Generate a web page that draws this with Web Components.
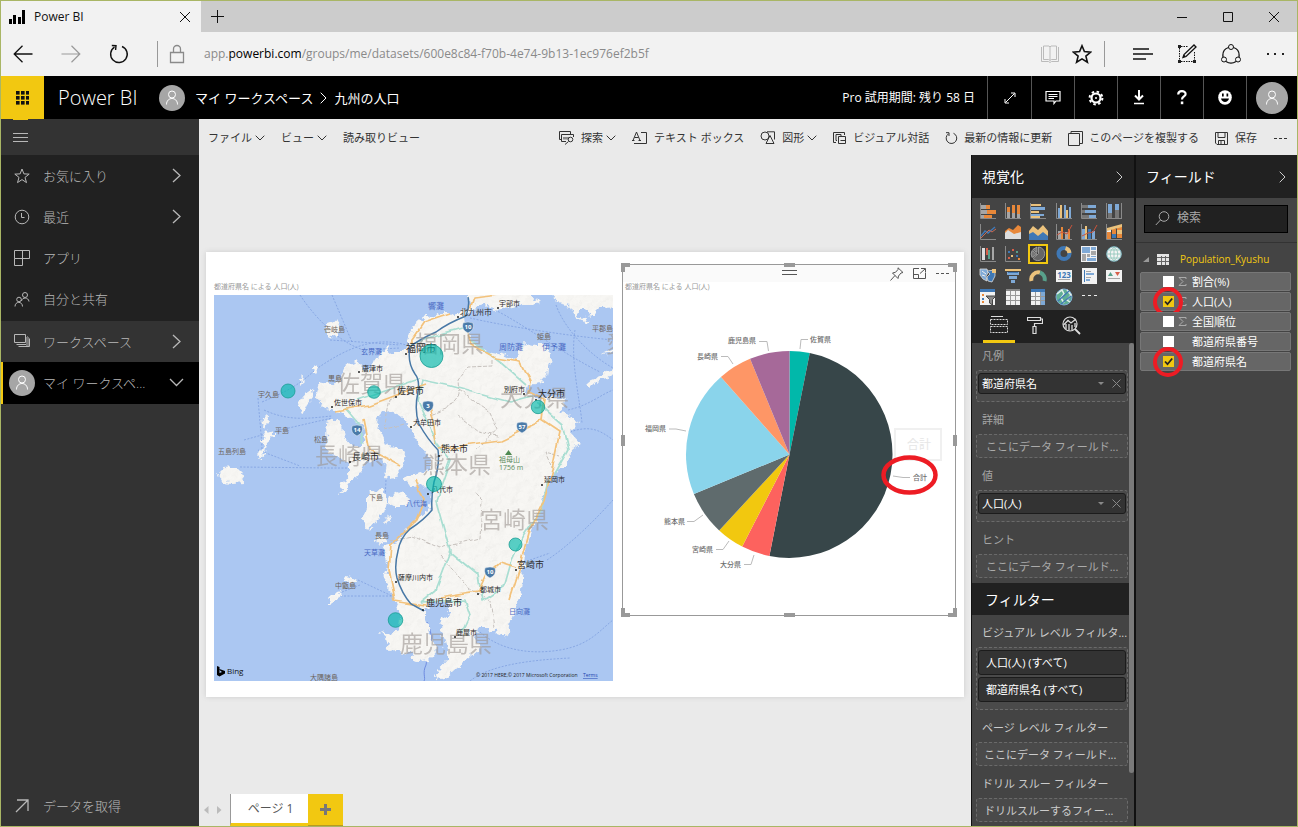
<!DOCTYPE html>
<html lang="ja">
<head>
<meta charset="utf-8">
<title>Power BI</title>
<style>
  html, body { margin: 0; height: 100%; }
  body { font-family: "Open Sans", "Noto Sans CJK JP", sans-serif; font-size: 11px; line-height: 16px; background: #eaeaea; }
</style>
</head>
<body>
<pbi-app></pbi-app>
<script>
const BASE = `
  *, *::before, *::after { box-sizing: border-box; }
  button, input { font: inherit; color: inherit; background: none; border: 0; padding: 0; margin: 0; }
  button { display: inline-flex; align-items: center; justify-content: center; white-space: nowrap; }
  a { color: inherit; text-decoration: none; }
  h1, h2, h3, p { margin: 0; font: inherit; }
`;
function define(name, html, setup) {
  const tpl = document.createElement('template');
  customElements.define(name, class extends HTMLElement {
    connectedCallback() {
      if (this.shadowRoot) return;
      tpl.innerHTML = typeof html === 'function' ? html(this) : html;
      this.attachShadow({ mode: 'open' }).appendChild(tpl.content.cloneNode(true));
      const base = document.createElement('style');
      base.textContent = BASE;
      this.shadowRoot.prepend(base);
      if (setup) setup(this);
    }
  });
}

/* ---------- icons: [width, height, markup] ---------- */
const r = (x, y, w, h, c) => `<rect x="${x}" y="${y}" width="${w}" height="${h}" fill="${c}" stroke="none"/>`;
const p = (d, extra = '') => `<path d="${d}" ${extra}/>`;
const O = '#e8883a', G = '#a6a6a6', B = '#7fa9d6', D = '#3f78b5', Y = '#ebc27c', W = '#f2f2f2';
const axis = p('M1.5 0V15.500H17', 'stroke="#8a8a8a"');
const person = '<circle cx="8" cy="5.500" r="3.500"/><path d="M2.500 15.500C2.500 7.500 13.500 7.500 13.500 15.500"/>';
const ICONS = {
  bars: [16, 14, r(0,9,3,5,'#000') + r(4,5,3,9,'#000') + r(9,7,3,7,'#000') + r(13,0,3,14,'#000')],
  close: [12, 12, p('M1 1L11 11M11 1L1 11')],
  closeS: [9, 9, p('M.5 .5L8.500 8.500M8.500 .5L.5 8.500')],
  plus: [13, 13, p('M6.500 0V13M0 6.500H13')],
  min: [10, 10, p('M0 5.500H10')],
  max: [10, 10, p('M.5 .5H9.500V9.500H.5Z')],
  back: [20, 18, p('M19.500 9H1M9.500 .8L1.200 9L9.500 17.200', 'stroke-width="1.300"')],
  fwd: [20, 18, p('M.5 9H19M10.500 .8L18.800 9L10.500 17.200', 'stroke-width="1.200"')],
  reload: [20, 20, p('M13 2.500A8.300 8.300 0 1 1 5.500 3.200M2.800 1.500L7 1.700L6.600 6', 'stroke-width="1.400"')],
  lock: [16, 20, p('M1.500 8.500H14.500V18.500H1.500ZM4.500 8.500V5A3.500 3.500 0 0 1 11.500 5V8.500', 'stroke-width="1.300"')],
  book: [20, 18, p('M1.500 2V16.500H8.500L10 17.500L11.500 16.500H18.500V2M3.500 1V14.500H8.500L10 15.500L11.500 14.500H16.500V1H11L10 2L9 1ZM10 2V15')],
  star: [20, 20, p('M10 1.800L12.400 7.600L18.700 8.100L13.900 12.100L15.400 18.200L10 14.900L4.600 18.200L6.100 12.100L1.300 8.100L7.600 7.600Z', 'stroke-width="1.600"')],
  lines: [20, 12, p('M0 1H16M0 6H20M0 11H13', 'stroke-width="1.300"')],
  note: [20, 20, p('M2.500 4V16M4 17.500H16M17.500 8V16M4 2.500H11', 'stroke-dasharray="1.500 1"') + r(1,1,3,3,'#222') + r(1,16,3,3,'#222') + r(16,16,3,3,'#222') + p('M6 13.500L7 10.500L17 1L19 3L9 12.500ZM6 13.500L8 11.500', 'stroke-width="1.300"')],
  share: [22, 20, '<circle cx="11" cy="3" r="2.500"/><circle cx="4" cy="15.500" r="2.500"/><circle cx="18" cy="15.500" r="2.500"/>' + p('M8.500 3.500C3.500 5 2.500 9 3 13M13.500 3.500C18.500 5 19.500 9 19 13M6 17.500C9 19.500 13 19.500 16 17.500', 'stroke-width="1.300"')],
  dots: [19, 4, r(1,1,2,2,'#222') + r(8,1,2,2,'#222') + r(16,1,2,2,'#222')],
  waffle: [13, 14, [0,5,10].map(x => [0,5,10].map(y => r(x,y,3.6,3.6,'#111')).join('')).join('')],
  person: [16, 17, person],
  expand: [12, 12, p('M1.500 10.500L10.500 1.500M7 1H11V5M1 7V11H5')],
  comment: [16, 15, p('M1 1.500H15V11H11L9 13.500V11H1ZM3.500 4.500H12.500M3.500 6.500H12.500M3.500 8.500H9', 'stroke-width="1.200"')],
  gear: [16, 16, '<circle cx="8" cy="8" r="4.500" stroke-width="2.200"/><circle cx="8" cy="8" r="6.400" stroke-width="2" stroke-dasharray="2.500 2.500"/><circle cx="8" cy="8" r="1" fill="currentColor" stroke="none"/>'],
  down: [12, 15, p('M6 0V9.500M2 5.500L6 9.500L10 5.500', 'stroke-width="2"') + p('M1 13.500H11', 'stroke-width="1.500"')],
  help: [12, 15, p('M2.200 4.500C2.200 .2 9.600 .2 9.600 4C9.600 6.500 6 6.500 6 9.500', 'stroke-width="2.200"') + r(4.800,11.500,2.500,2.700,'#fff')],
  smile: [14, 15, '<ellipse cx="7" cy="7.500" rx="6.800" ry="7.300" fill="currentColor" stroke="none"/>' + r(4,3.500,1.700,3,'#000') + r(8.500,3.500,1.700,3,'#000') + p('M3 8.500C4 13 10 13 11 8.500Z', 'fill="#000" stroke="none"')],
  menu: [16, 9, p('M0 .5H15M0 4.500H15M0 8.500H15')],
  navstar: [16, 16, p('M8 1L9.900 5.900L15.200 6.100L11 9.400L12.500 14.600L8 11.600L3.500 14.600L5 9.400L.8 6.100L6.100 5.900Z')],
  clock: [16, 16, '<circle cx="8" cy="8" r="6.800"/>' + p('M7.500 4V8.500H10.500')],
  apps: [16, 16, p('M.5 .5H15.500V8.500H.5ZM8.500 .5V8.500M.5 8.500V15.500H8.500V8.500')],
  people: [16, 16, '<circle cx="11" cy="4" r="2.500"/><circle cx="5" cy="8.500" r="2.300"/>' + p('M7.500 10C8 6 14.500 6 15 10.500M1 15.500C1 10 8.500 10 8.500 15.500')],
  stack: [16, 15, p('M.5 .5H11.500V8.500H.5ZM2.500 10.500H13.500V2.500M4.500 12.500H15.500V4.500') + r(12,3,3,9,'#777')],
  right: [9, 15, p('M1 1L8 7.500L1 14', 'stroke-width="1.300"')],
  rightS: [7, 12, p('M.7 .7L6 6L.7 11.300')],
  chevDown: [15, 9, p('M1 1L7.500 7.500L14 1', 'stroke-width="1.300"')],
  chevS: [10, 6, p('M.7 .7L5 5L9.300 .7')],
  getdata: [14, 14, p('M1 13L12.500 1.500M2 1H13V12', 'stroke-width="1.300"')],
  explore: [16, 14, p('M3 8.500H.5V.5H11.500V3M7 10.500H2.500V3.500H14.500V6M5 6V8.500M7 6V8.500M9 6V8.500') + '<circle cx="11.500" cy="8.500" r="2.300"/>' + p('M9.500 10.500L6 13.500')],
  textbox: [16, 14, p('M1 9.500L4.500 1L8 9.500M2.500 6.500H6.500M0 9.500H2.500M6.500 9.500H9M9 1.500H14.500V12.500H2')],
  shapes: [16, 14, '<circle cx="5" cy="5" r="4"/>' + p('M7 .8H14.500V8.500M6 12.500L10 4.500L14 12.500Z')],
  visual: [14, 13, p('M3 10.500H.5V.5H11.500V3M4 8.500H3V2.500H8V5M5.500 4.500H12.500V11.500H5.500ZM7.500 8.500H12.500')],
  refresh: [13, 13, p('M8.500 1.300A5.300 5.300 0 1 1 3.500 1.800M1 .7H4V4')],
  copy: [15, 15, p('M.5 2.500H11.500V14.500H.5ZM3 2V.5H14.500V12.500H12')],
  save: [14, 13, p('M.5 .5H12.500V12.500H2L.5 11ZM3 .5V5.500H10V.5M3.500 12.500V8.500H9.500V12.500M6 9V12')],
  moreS: [15, 3, r(1,1,3,1,'currentColor') + r(6,1,3,1,'currentColor') + r(11,1,3,1,'currentColor')],
  grip: [15, 5, p('M0 .5H15M0 4.500H15')],
  pin: [14, 14, p('M8 .8L13 5.500L11 6L8.500 9L8 11.500L2.500 6L5.500 5.300L8 2.500ZM5 8.500L.5 13.500')],
  focus: [13, 11, p('M6 .5H.5V10.500H12.500V5M8 .5H12.500V4.500M12 1L7 5.500M.5 6.500H5.500V10.500')],
  left: [5, 8, p('M4.500 0L0 4L4.500 8Z', 'fill="currentColor" stroke="none"')],
  rightT: [5, 8, p('M0 0L4.500 4L0 8Z', 'fill="currentColor" stroke="none"')],
  plusB: [11, 11, p('M5.500 0V11M0 5.500H11', 'stroke-width="3"')],
  search: [15, 15, '<circle cx="9" cy="5.500" r="4.800"/>' + p('M5.500 9L.8 14')],
  tri: [6, 5, p('M0 5H6V0Z', 'fill="currentColor" stroke="none"')],
  caret: [6, 3, p('M0 0H6L3 3Z', 'fill="currentColor" stroke="none"')],
  table: [12, 11, r(0,0,12,11,'#e6e6e6') + p('M0 3.500H12M0 7.500H12M4.500 2V11M8.500 2V11', 'stroke="#666"')],
  sigma: [9, 9, p('M8 2V.5H1L5 4.500L1 8.500H8V7')],
  fieldsTab: [18, 18, p('M1 .5H13') + p('M.5 3.500H17.500V8.500H.5ZM.5 10.500H17.500V16.500H.5Z', 'stroke-dasharray="2 1"')],
  format: [16, 18, p('M.5 1.500H13.500V4.500H.5ZM13.500 3H15.500V7.500H7.500V10M6 10.500H9V17.500H6Z', 'stroke-width="1.200"')],
  analytics: [19, 19, '<circle cx="8" cy="8" r="7" stroke-width="1.200"/>' + p('M1.500 9L6 4.500L9 7L14 3M4 8V13M7 8V14.500M10 9V14M13 7V11', 'stroke-width="1.300"') + p('M13 13L18 18', 'stroke-width="1.800"')],
  /* chart gallery */
  v0: [18,16, axis + r(2,2,5,4,G)+r(7,2,4,4,O)+r(2,7,6,4,G)+r(8,7,9,4,O)+r(2,12,3,3,G)+r(5,12,8,3,O)],
  v1: [18,16, axis + r(3,8,3,7,G)+r(3,4,3,5,O)+r(8,9,3,6,G)+r(8,2,3,8,O)+r(13,11,3,4,G)+r(13,2,3,9,O)],
  v2: [18,16, axis + r(2,1,10,2,Y)+r(2,4,14,3,B)+r(2,8,8,2,Y)+r(2,11,13,2,B)+r(2,13,9,2,Y)],
  v3: [18,16, axis + r(3,5,2,10,B)+r(5,2,2,13,Y)+r(9,2,2,13,B)+r(11,7,2,8,Y)+r(14,4,2,11,B)],
  v4: [18,16, axis + r(2,2,6,3,'#777')+r(8,2,8,3,B)+r(2,7,3,3,'#777')+r(5,7,11,3,B)+r(2,12,7,3,'#777')+r(9,12,7,3,B)],
  v5: [18,16, axis + r(3,1,4,9,B)+r(3,10,4,5,'#777')+r(10,1,4,6,B)+r(10,7,4,8,'#777')+p('M16.500 0V15','stroke="#8a8a8a"')],
  v6: [18,16, axis + p('M2 12L6 7L9 9L16 3',`stroke="${D}" stroke-width="1.400"`)+p('M2 14L6 10L10 6L13 8L17 5','stroke="#c96a52"')],
  v7: [18,16, p('M1 15V7L5 4L9 6L14 1L17 3V15Z',`fill="${O}" stroke="none"`)+p('M1 15V9L4 6L10 10L17 8V15Z',`fill="#ddd" stroke="none"`)],
  v8: [19,16, p('M0 16V7L4 2L9 6L14 1L19 7V16Z',`fill="${Y}" stroke="none"`)+p('M0 16V10L4 8L9 12L14 8L19 12V16Z',`fill="${D}" stroke="none"`)],
  v9: [18,16, axis + r(3,7,3,8,G)+r(6,3,2,12,O)+r(10,8,3,7,G)+r(13,5,2,10,O)+p('M2 11L7 8L12 10L17 1','stroke="#c9543c"')],
  v10: [18,16, axis + r(2,5,3,10,B)+r(5,2,2,13,Y)+r(8,5,3,10,D)+r(12,7,3,8,B)+p('M2 12L8 9L13 8L17 1','stroke="#c9543c"')],
  v11: [18,16, axis + r(2,6,4,9,O)+r(2,5,4,3,'#eee')+r(7,5,4,9,O)+r(7,10,4,4,D)+r(12,2,5,12,O)+r(12,6,5,4,Y)+p('M2 4L17 0V3L2 7Z',`fill="${Y}" stroke="none"`)],
  v12: [18,16, axis + r(3,2,3,12,'#ddd')+r(7,2,2,7,'#d65f4a')+r(9,4,2,9,'#58a08b')+r(13,1,2,13,G)],
  v13: [18,16, axis + r(4,5,2,2,D)+r(8,3,2,2,'#d65f4a')+r(12,5,2,2,'#58a08b')+r(7,9,2,2,Y)+r(12,9,2,2,D)+r(4,11,2,2,'#d65f4a')+r(14,12,2,2,O)],
  v14: [20,20, '<rect x="1" y="1" width="18" height="18" fill="#333" stroke="#f2c811" stroke-width="2"/><path d="M10.500 9.500V3A6.800 6.800 0 1 1 5 14.500Z" fill="#666" stroke="#aaa" stroke-width=".8"/><path d="M9 10L4 13.500A7.500 7.500 0 0 1 4 6.500ZM9 8.500L4.800 5.500L9 3Z" fill="#777" stroke="#aaa" stroke-width=".8"/>'],
  v15: [18,17, `<circle cx="9" cy="8.500" r="5.500" stroke="${D}" stroke-width="4"/><path d="M10.500 3.200A5.500 5.500 0 0 1 14.400 8" stroke="${Y}" stroke-width="4"/>`],
  v16: [18,16, r(1,0,16,16,W)+r(2,1,8,6,B)+r(11,1,5,3,B)+r(11,5,5,4,G)+r(2,8,4,7,G)+r(7,8,3,3,G)+r(7,12,9,3,B)+r(11,10,5,1,B)],
  v17: [18,16, `<circle cx="9" cy="8" r="7.300" fill="#f4f4f4" stroke="#7fb8c4"/><path d="M2 8H16M3.500 4H14.500M3.500 12H14.500M9 1V15M9 1C4 5 4 11 9 15M9 1C14 5 14 11 9 15" stroke="#8cc4b8" stroke-width=".8"/>`],
  v18: [18,16, p('M1 1H8L9 5L7 8L8 13L4 11L1 7Z',`fill="${B}" stroke="#ddd" stroke-width=".8"`)+p('M8 3L16 2V8L13 14L9 13L8 9L11 6Z',`fill="${D}" stroke="#ddd" stroke-width=".8"`)+r(13,1,4,4,Y)+p('M3 3L7 6M3 7L6 8','stroke="#eee"')],
  v19: [18,16, r(1,1,16,2,Y)+r(3,4,12,3,B)+r(5,8,8,3,B)+r(7,12,4,3,B)+r(4,4,10,1,D)],
  v20: [18,16, p('M2.500 13A7 7 0 0 1 11 4.500',`stroke="${Y}" stroke-width="4"`)+p('M11 4.500A7 7 0 0 1 15.500 13','stroke="#58a08b" stroke-width="4"')],
  v21: [18,16, r(1,2,16,12,W)+`<text x="9" y="10" font-size="8" font-weight="700" text-anchor="middle" fill="${D}" stroke="none">123</text>`+r(3,11,12,1,G)],
  v22: [18,16, r(2,0,15,16,W)+r(4,2,1,12,D)+r(6,3,5,1,G)+r(6,5,8,2,B)+r(6,9,5,1,G)+r(6,11,4,2,B)],
  v23: [18,16, r(1,2,16,12,W)+p('M3 8L5.500 4L8 8Z','fill="#58a08b" stroke="none"')+p('M10 4H15L12.500 8Z','fill="#d65f4a" stroke="none"')+r(3,10,12,1,G)],
  v24: [18,16, r(1,0,15,16,W)+r(1,0,15,3,D)+r(3,5,2,2,O)+r(3,9,2,2,D)+r(3,12,2,2,O)+p('M7 7H17L13.500 10.500V16L10.500 14V10.500Z','fill="#888" stroke="#444"')],
  v25: [18,16, r(2,0,14,16,W)+r(2,0,14,2,'#888')+p('M2 6.500H16M2 11.500H16M6.500 2V16M11.500 2V16','stroke="#999"')],
  v26: [18,16, r(2,0,14,16,W)+r(2,0,14,3,D)+r(12,3,4,13,B)+p('M2 7.500H16M2 11.500H16M6.500 3V16M11.500 3V16','stroke="#999"')],
  v27: [18,18, `<circle cx="9" cy="9" r="8" fill="#5fae94" stroke="${B}"/><path d="M2 6L7 2L9 6L6 10L9 15M12 2L16 7L12 12L15 14" stroke="#e4efe9" stroke-width="1.500"/><path d="M3 13L14 3M6 16L16 8" stroke="${D}" stroke-width="1.300"/>`],
  v28: [18,16, r(2,6,3,1,'#eee')+r(8,6,3,1,'#eee')+r(14,6,3,1,'#eee')]
};
define('ui-icon', el => {
  const [w, h, body] = ICONS[el.getAttribute('name')];
  return `<style>:host{display:inline-flex;flex:none}svg{display:block}</style>
  <svg width="${w}" height="${h}" viewBox="0 0 ${w} ${h}" fill="none" stroke="currentColor" aria-hidden="true">${body}</svg>`;
});
define('user-avatar', `<style>
  :host{display:flex;flex:none;width:var(--size,26px);height:var(--size,26px);border-radius:50%;background:#a6a6a6;color:#fff;align-items:center;justify-content:center}
</style><ui-icon name="person"></ui-icon>`);

/* ---------- browser frame ---------- */
define('browser-chrome', `<style>
  :host{display:block;color:#111}
  .strip{display:flex;height:31px;background:#ccc}
  .tab{display:flex;align-items:center;width:200px;background:#f2f2f2;padding:0 10px 0 8px;font-size:12px}
  .tab span{margin-left:9px;flex:1}
  .new{width:33px}
  .win{display:flex;margin-left:auto}
  .win button{width:46px}
  .bar{display:flex;align-items:center;height:44px;background:#f2f2f2;padding-left:8px}
  .nav{display:flex;gap:20px}
  .nav button{width:28px;height:40px}
  .nav button[disabled]{color:#999}
  .sep{width:1px;height:26px;background:#999;flex:none}
  .after-nav{margin-left:24px}
  .after-tools{margin-left:6px}
  .url{flex:1;display:flex;align-items:center;gap:19px;margin-left:11px;font-size:12px;color:#8a8a8a;min-width:0}
  .url b{font-weight:400;color:#000}
  .tools{display:flex}
  .tools button{width:32px;height:40px}
  .menu{display:flex;margin-left:16px}
  .menu button{width:44px;height:40px}
  .tools .book{color:#bbb}
</style>
<div class="strip">
  <div class="tab"><ui-icon name="bars"></ui-icon><span>Power BI</span><button aria-label="タブを閉じる"><ui-icon name="close"></ui-icon></button></div>
  <button class="new" aria-label="新しいタブ"><ui-icon name="plus"></ui-icon></button>
  <div class="win"><button aria-label="最小化"><ui-icon name="min"></ui-icon></button><button aria-label="最大化"><ui-icon name="max"></ui-icon></button><button aria-label="閉じる"><ui-icon name="close"></ui-icon></button></div>
</div>
<div class="bar">
  <div class="nav"><button aria-label="戻る"><ui-icon name="back"></ui-icon></button><button disabled aria-label="進む"><ui-icon name="fwd"></ui-icon></button><button aria-label="更新"><ui-icon name="reload"></ui-icon></button></div>
  <div class="sep after-nav"></div>
  <div class="url"><ui-icon name="lock"></ui-icon><span role="textbox" aria-label="アドレス">app.<b>powerbi.com</b>/groups/me/datasets/600e8c84-f70b-4e74-9b13-1ec976ef2b5f</span></div>
  <div class="tools"><button class="book" aria-label="読み取りビュー"><ui-icon name="book"></ui-icon></button><button aria-label="お気に入りに追加"><ui-icon name="star"></ui-icon></button></div>
  <div class="sep after-tools"></div>
  <div class="menu"><button aria-label="ハブ"><ui-icon name="lines"></ui-icon></button><button aria-label="ノート"><ui-icon name="note"></ui-icon></button><button aria-label="共有"><ui-icon name="share"></ui-icon></button><button aria-label="その他"><ui-icon name="dots"></ui-icon></button></div>
</div>`);

/* ---------- service header ---------- */
define('pbi-header', `<style>
  :host{display:flex;align-items:stretch;height:43px;background:#000;color:#fff;font-size:13px}
  .launch{width:43px;background:#f2c811;flex:none;position:relative}
  .launch::after{content:"";position:absolute;left:12px;bottom:-1px;width:15px;height:1px;background:#f2c811}
  .brand{align-self:center;font-size:20px;line-height:28px;font-weight:300;margin-left:14px;width:101px;white-space:nowrap}
  nav{display:flex;align-items:center;gap:10px}
  nav a{white-space:nowrap}
  nav ui-icon{margin:0 -3px}
  .trial{margin-left:auto;align-self:center;font-size:12px;padding-right:12px;white-space:nowrap}
  .cell{width:43px;border-left:1px solid #555;flex:none}
  .cell:first-of-type{width:44px}
  .expand{width:44px}
  .cell:last-child{width:51px}
  user-avatar{--size:32px}
  nav user-avatar{--size:26px}
</style>
<button class="launch" aria-label="アプリ起動"><ui-icon name="waffle"></ui-icon></button>
<span class="brand">Power BI</span>
<nav><user-avatar></user-avatar><a href="#">マイ ワークスペース</a><ui-icon name="rightS"></ui-icon><a href="#">九州の人口</a></nav>
<span class="trial">Pro 試用期間: 残り 58 日</span>
<button class="cell expand" aria-label="全画面"><ui-icon name="expand"></ui-icon></button>
<button class="cell" aria-label="コメント"><ui-icon name="comment"></ui-icon></button>
<button class="cell" aria-label="設定"><ui-icon name="gear"></ui-icon></button>
<button class="cell" aria-label="ダウンロード"><ui-icon name="down"></ui-icon></button>
<button class="cell" aria-label="ヘルプ"><ui-icon name="help"></ui-icon></button>
<button class="cell" aria-label="フィードバック"><ui-icon name="smile"></ui-icon></button>
<button class="cell" aria-label="アカウント"><user-avatar></user-avatar></button>`);

/* ---------- left navigation ---------- */
define('nav-item', el => `<style>
  :host{display:block}
  a{display:flex;align-items:center;height:41px;padding:0 18px 0 8px;color:#b8b8b8}
  :host([arrow="chevDown"]) a{padding:0 15px 0 6px}
  .i{width:26px;display:flex;justify-content:center;flex:none}
  .t{flex:1;margin-left:8px;white-space:nowrap}
</style><a href="#"><span class="i"><slot name="icon"></slot></span><span class="t"><slot></slot></span>${el.hasAttribute('arrow') ? `<ui-icon name="${el.getAttribute('arrow')}"></ui-icon>` : ''}</a>`);
define('side-nav', `<style>
  :host{display:flex;flex-direction:column;background:#333;font-size:13px;font-weight:300;color:#b8b8b8}
  .burger{height:36px;padding-left:12px;justify-content:flex-start}
  .group{background:#212121;padding-bottom:2px}
  .mine{background:#000;border-left:2px solid #f2c811;padding-bottom:1px}
  .get{margin-top:auto}
</style>
<button class="burger" aria-label="メニュー"><ui-icon name="menu"></ui-icon></button>
<div class="group">
<nav-item arrow="right"><ui-icon slot="icon" name="navstar"></ui-icon>お気に入り</nav-item>
<nav-item arrow="right"><ui-icon slot="icon" name="clock"></ui-icon>最近</nav-item>
<nav-item><ui-icon slot="icon" name="apps"></ui-icon>アプリ</nav-item>
<nav-item><ui-icon slot="icon" name="people"></ui-icon>自分と共有</nav-item>
</div>
<nav-item arrow="right"><ui-icon slot="icon" name="stack"></ui-icon>ワークスペース</nav-item>
<nav-item class="mine" arrow="chevDown"><user-avatar slot="icon"></user-avatar>マイ ワークスペ...</nav-item>
<nav-item class="get"><ui-icon slot="icon" name="getdata"></ui-icon>データを取得</nav-item>`);

/* ---------- report toolbar ---------- */
define('tool-button', el => `<style>
  :host{display:inline-flex}
  button{gap:6px;height:36px;padding-top:2px;color:#333}
  .c{margin-left:-3px;}
</style><button>${el.hasAttribute('icon') ? `<ui-icon name="${el.getAttribute('icon')}"></ui-icon>` : ''}<slot></slot>${el.hasAttribute('menu') ? '<ui-icon class="c" name="chevS"></ui-icon>' : ''}</button>`);
define('report-toolbar', `<style>
  :host{display:flex;height:36px;background:#eaeaea;color:#333;padding:0 9px}
  .l,.r{display:flex;gap:16px}
  .r{margin-left:auto}
</style>
<div class="l"><tool-button menu>ファイル</tool-button><tool-button menu>ビュー</tool-button><tool-button>読み取りビュー</tool-button></div>
<div class="r"><tool-button icon="explore" menu>探索</tool-button><tool-button icon="textbox">テキスト ボックス</tool-button><tool-button icon="shapes" menu>図形</tool-button><tool-button icon="visual">ビジュアル対話</tool-button><tool-button icon="refresh">最新の情報に更新</tool-button><tool-button icon="copy">このページを複製する</tool-button><tool-button icon="save">保存</tool-button><tool-button icon="moreS" aria-label="その他"></tool-button></div>`);

/* ---------- map ---------- */
const LAND = [
 '410,333 415,324 423,318 434,316 443,313 452,317 458,314 460,309 470,310 466,318 467,327 470,338 477,347 492,353 503,355 510,358 518,357 517,350 525,343 535,345 543,345 549,351 551,358 549,368 548,375 540,383 527,385 525,392 535,398 546,399 557,397 568,400 560,410 567,417 578,422 570,432 580,443 571,450 570,459 562,468 553,474 546,489 541,502 540,512 534,524 530,535 525,553 522,577 521,593 513,612 508,637 497,633 487,628 478,628 474,638 480,648 463,663 447,677 437,681 436,675 438,670 447,660 447,652 443,637 440,620 450,613 450,603 440,603 430,605 425,610 425,620 430,633 437,652 430,660 417,662 410,653 398,651 386,652 388,640 379,632 388,634 399,630 400,617 396,603 393,593 383,583 387,572 388,565 383,547 399,542 406,530 416,520 424,513 430,507 432,493 423,485 410,486 405,480 416,473 430,470 431,462 428,455 417,442 410,427 406,421 393,412 384,411 378,418 376,427 381,432 383,438 387,446 399,447 405,453 402,467 394,478 385,476 387,464 378,458 366,461 360,472 353,480 344,491 339,496 343,483 349,470 349,463 339,458 329,453 326,437 327,423 336,419 343,426 345,438 352,446 362,446 366,436 362,424 350,418 336,412 321,407 316,393 319,383 330,385 339,383 343,372 346,365 356,361 366,373 373,363 380,353 386,347 393,353 403,353 406,347',
 '327,322 336,319 341,328 336,338 327,336', '300,400 306,392 312,388 313,397 307,404 303,412 297,409',
 '258,455 264,447 262,440 268,432 274,430 274,437 267,443 265,452 261,458', '218,474 224,468 236,467 242,473 244,482 234,483 222,482',
 '264,418 268,414 267,428 263,430', '372,491 383,490 387,500 385,512 377,520 369,530 361,520 366,508 366,498', '390,497 398,492 411,498 406,506 394,506 388,503',
 '376,538 383,536 387,541 378,545', '329,605 329,600 337,592 341,591 337,600', '345,576 352,577 358,580 354,583 346,581',
 '470,312 468,303 470,285 532,285 532,297 540,301 534,305 522,304 510,308 494,310 484,304 476,306', '548,285 623,285 623,307 600,308 592,316 588,309 579,310 577,316 590,321 586,323 577,318 570,306 558,303',
 '586,384 592,379 600,376 608,371 623,366 623,372 604,378 596,381 590,387', '600,355 606,352 623,347 623,352', '387,517 391,521 385,525', '312,369 317,367 318,371 313,372', '300,380 303,375 302,386'
];
const CITY = [[406,352,10,'福岡市'],[460,315,8,'北九州市'],[499,306,7,'宇部市'],[504,392,7,'別府市'],[538,397,9,'大分市'],[397,394,9,'佐賀市'],[413,425,7,'大牟田市'],[441,452,9,'熊本市'],[544,482,7,'延岡市'],[432,492,7,'八代市'],[517,568,9,'宮崎市'],[480,592,7,'都城市'],[426,606,9,'鹿児島市'],[456,635,7,'鹿屋市'],[398,580,7,'薩摩川内市'],[362,371,7,'唐津市'],[334,405,7,'佐世保市'],[352,460,9,'長崎市']];
const ISLE = [[592,331,7,'平郡島'],[537,339,7,'姫島'],[369,500,7,'下島'],[375,538,7,'長島'],[335,588,7,'中甑島'],[310,680,7,'大隅諸島'],[324,332,7,'壱岐島'],[328,381,7,'黒島'],[258,397,7,'宇久島'],[275,433,7,'平島'],[314,442,7,'松島'],[218,454,7,'五島列島']];
const SEA = [[499,350,8,'周防灘'],[542,350,8,'伊予灘'],[428,309,8,'響灘'],[406,506,7,'八代海'],[509,614,7,'日向灘'],[364,555,7,'天草灘'],[361,354,7,'玄界灘']];
const PREF = [[415,352,'福岡県'],[500,406,'大分県'],[422,473,'熊本県'],[337,392,'佐賀県'],[315,464,'長崎県'],[480,528,'宮崎県'],[400,652,'鹿児島県'],[606,352,'愛']];
const txt = fill => ([x, y, s, t]) => `<text x="${x}" y="${y}" font-size="${s}" fill="${fill}">${t}</text>`;
const shield = (x, y, n) => `<path d="M${x-5} ${y-4}Q${x} ${y-6} ${x+5} ${y-4}Q${x+7} ${y+3} ${x} ${y+6}Q${x-7} ${y+3} ${x-5} ${y-4}Z" fill="#4a7aa8" stroke="#e8eef5" stroke-width=".5"/><text x="${x}" y="${y+2}" font-size="6" font-weight="700" fill="#fff" text-anchor="middle">${n}</text>`;
define('map-visual', `<style>
  :host{display:block}
  h3{font-size:7px;line-height:16px;color:#999;white-space:nowrap}
  svg{display:block;width:100%;height:auto}
</style>
<h3>都道府県名 による 人口(人)</h3>
<svg viewBox="214 295 399 386" role="img" aria-label="九州の地図">
<defs>
  <filter id="coast" x="-5%" y="-5%" width="110%" height="110%"><feTurbulence type="fractalNoise" baseFrequency=".16" numOctaves="3" seed="4"/><feDisplacementMap in="SourceGraphic" scale="9" xChannelSelector="R" yChannelSelector="G"/></filter>
  <filter id="wob" x="-10%" y="-10%" width="120%" height="120%"><feTurbulence type="fractalNoise" baseFrequency=".06" numOctaves="1" seed="9"/><feDisplacementMap in="SourceGraphic" scale="8" xChannelSelector="R" yChannelSelector="G"/></filter>
  <filter id="relief" x="0" y="0" width="100%" height="100%"><feTurbulence type="fractalNoise" baseFrequency=".13" numOctaves="4" seed="2"/><feDiffuseLighting surfaceScale="1.500" lighting-color="#fff" result="l"><feDistantLight azimuth="225" elevation="70"/></feDiffuseLighting><feComposite in="l" in2="SourceAlpha" operator="in"/></filter>
  <g id="land">${LAND.map(s => `<polygon points="${s}"/>`).join('')}</g>
</defs>
<rect x="214" y="295" width="399" height="386" fill="#abc7f2"/>
<g fill="none" stroke="#7f9fe0" stroke-width=".8" stroke-dasharray="2 1.500">
  <path d="M300 295C320 325 345 345 364 350L400 348M332 295L352 342M412 347C380 335 350 345 315 370C300 384 290 390 262 402M330 340L360 342L400 345M258 398C260 425 262 440 262 452M264 410C290 422 310 418 332 416M240 467L330 468L350 468M258 450L300 466M244 440L280 430L332 418M470 318C500 325 560 335 613 340M495 310C520 322 560 352 600 372M575 330C570 360 580 400 582 423M568 410C590 405 600 395 613 390M556 305C565 330 590 355 613 368M570 432C590 425 600 430 613 440M547 560C570 545 595 520 613 500M530 560L550 553M480 632C500 650 530 655 560 650C590 645 600 630 613 620M470 681C490 665 530 660 570 658M360 585L337 594M358 580L392 596M337 596H392M386 480L385 500"/>
</g>
<path d="M427 622C436 640 428 650 426 665C422 673 426 678 424 681" fill="none" stroke="#6e8be0"/>
<g filter="url(#coast)"><use href="#land" fill="#f6f5f1"/></g>
<g filter="url(#coast)"><g filter="url(#relief)" style="mix-blend-mode:multiply" opacity=".25"><use href="#land"/></g></g>
<g fill="none" stroke-linejoin="round" filter="url(#wob)">
  <path d="M492 360V366L468 367L457 380L458 395L446 410M458 390L490 412L498 430L475 450M446 410L430 416M498 436L478 432L456 415M553 470L545 452L560 456M390 540L412 536L440 548L480 538L482 500L474 492M440 555L470 590L490 600L494 628M404 424L384 430L390 400L404 392" stroke="#c6c1bd" stroke-dasharray="4 1.500"/>
  <path d="M410 343L430 337L462 328M422 380L450 386L480 394L510 402L532 396M470 340L500 362L525 384M422 380L418 400L438 445L450 460L436 500L450 550L435 590L420 602M450 552L478 575L482 600L505 585L512 560L524 535L541 510L548 480M538 403L562 424L568 450L552 478M356 400L385 390L420 378M345 408L360 425L364 443M420 602L465 600L470 615L462 632" stroke="#a9ded2" stroke-width="1.700"/>
  <path d="M410 342L423 323L450 314M467 328L472 345L495 358L520 362L530 382L528 392L545 400L542 420L500 440L470 444L440 450M542 420L560 432L552 470L544 500L530 530L520 568L510 600M436 445L434 425L428 405M336 411L370 405L405 392L425 385M364 420L370 450L400 466M416 480L424 500L416 520L390 545L388 570L394 600L425 605M440 598L478 592L486 575L500 563L516 568M470 310L474 298L500 295" stroke="#f3c27b" stroke-width="1.700"/>
</g>
<path d="M466 316Q448 323 436 332Q418 340 410 347Q407 362 415 374Q420 380 418 392Q414 410 419 424Q428 440 438 450Q440 465 434 482Q431 496 432 510Q424 520 410 529Q400 538 398 551Q394 566 397 578Q402 594 411 604L424 611M466 316Q470 306 468 297" fill="none" stroke="#4878a6" stroke-width="1.500"/>
<g fill="#9d9692" opacity=".6" font-size="23">${PREF.map(([x,y,t]) => `<text x="${x}" y="${y}">${t}</text>`).join('')}</g>
${shield(357,430,14)}${shield(468,327,10)}${shield(428,406,3)}${shield(522,427,57)}${shield(490,572,10)}
${CITY.map(txt('#2b2b2b')).join('')}${ISLE.map(txt('#6b645c')).join('')}${SEA.map(txt('#4a6bc4')).join('')}
<path d="M505 455L508.500 450L512 455Z" fill="#4f8a52"/>
${[[499,462,7,'祖母山'],[499,470,7,'1756 m']].map(txt('#5a8a5c')).join('')}
<g fill="#222"><circle cx="458" cy="317" r="1"/><circle cx="498" cy="308" r="1"/><circle cx="524" cy="394" r="1"/><circle cx="536" cy="400" r="1"/><circle cx="396" cy="397" r="1"/><circle cx="411" cy="427" r="1"/><circle cx="439" cy="456" r="1"/><circle cx="542" cy="485" r="1"/><circle cx="428" cy="494" r="1"/><circle cx="516" cy="570" r="1"/><circle cx="478" cy="594" r="1"/><circle cx="423" cy="610" r="1"/><circle cx="455" cy="637" r="1"/><circle cx="396" cy="582" r="1"/><circle cx="359" cy="372" r="1"/><circle cx="332" cy="407" r="1"/><circle cx="350" cy="462" r="1"/><circle cx="406" cy="354" r="1"/></g>
<g fill="#01b8aa" fill-opacity=".65" stroke="#1b9d93" stroke-width=".8"><circle cx="288" cy="391" r="7"/><circle cx="374" cy="392" r="6.300"/><circle cx="431.500" cy="356" r="11.500"/><circle cx="538" cy="407" r="6.700"/><circle cx="434" cy="484" r="7.500"/><circle cx="515.500" cy="544.500" r="6.500"/><circle cx="395.500" cy="620" r="7.300"/></g>
<path d="M217 666L219.500 667V673L222 672L220 670.500L219.500 669L225 671V673.500L219.500 676.500L217 675Z" fill="#000"/>
<text x="227" y="674" font-size="8" fill="#111">Bing</text>
<text x="476" y="677" font-size="5" fill="#222">© 2017 HERE,© 2017 Microsoft Corporation</text>
<a href="#"><text x="583" y="677" font-size="5" fill="#1b3fae" text-decoration="underline">Terms</text></a>
</svg>`);

/* ---------- pie ---------- */
const CX = 789.5, CY = 454.5, R = 103.5;
const SLICES = [[0,11.3,'#01b8aa'],[11.3,191.2,'#374649'],[191.2,207.2,'#fd625e'],[207.2,222.8,'#f2c80f'],[222.8,247.5,'#5f6b6d'],[247.5,318.5,'#8ad4eb'],[318.5,337.6,'#fe9666'],[337.6,360,'#a66999']];
const at = a => `${(CX + R * Math.sin(a * Math.PI / 180)).toFixed(2)} ${(CY - R * Math.cos(a * Math.PI / 180)).toFixed(2)}`;
define('pie-visual', `<style>
  :host{display:block;position:relative;border:1px solid #999;background:#fff}
  header{display:flex;align-items:center;justify-content:flex-end;height:17px;background:#fafafa;color:#555;padding-right:5px;gap:9px;position:relative}
  .grip{position:absolute;left:50%;top:5px;margin-left:-7px}
  h3{font-size:7px;line-height:10px;height:9px;color:#999;padding:0 2px;white-space:nowrap}
  svg{display:block;width:100%;height:auto}
  i{position:absolute;background:#999}
  .n,.s{left:50%;margin-left:-5px;width:11px;height:4px}.n{top:-2px}.s{bottom:-2px}
  .w,.e{top:50%;margin-top:-5px;height:11px;width:4px}.w{left:-2px}.e{right:-2px}
  .k{width:9px;height:9px;background:none;border:0 solid #999}
  .nw{top:-2px;left:-2px;border-width:4px 0 0 4px}.ne{top:-2px;right:-2px;border-width:4px 4px 0 0}
  .sw{bottom:-2px;left:-2px;border-width:0 0 4px 4px}.se{bottom:-2px;right:-2px;border-width:0 4px 4px 0}
</style>
<header><ui-icon class="grip" name="grip"></ui-icon><button aria-label="ピン留め"><ui-icon name="pin"></ui-icon></button><button aria-label="フォーカス モード"><ui-icon name="focus"></ui-icon></button><button aria-label="その他"><ui-icon name="moreS"></ui-icon></button></header>
<h3>都道府県名 による 人口(人)</h3>
<svg viewBox="623 291 332 324" role="img" aria-label="都道府県別人口の円グラフ">
${SLICES.map(([a,b,c]) => `<path d="M${CX} ${CY}L${at(a)}A${R} ${R} 0 ${b-a>180?1:0} 1 ${at(b)}Z" fill="${c}"/>`).join('')}
<g fill="none" stroke="#bbb"><path d="M800 349L801 339.500H808M768.500 351L767 341.500H759M733 364L728 356.500H721M686 431L676 429H669M703 515L694 521.500H687M729 541L723 549.500H716M754 555L751 564.500H744M893 476L903 477.500H910"/></g>
<g font-size="7" font-weight="500" fill="#6e6e6e"><text x="810" y="342">佐賀県</text><text x="728" y="343">鹿児島県</text><text x="697" y="359">長崎県</text><text x="645" y="431">福岡県</text><text x="664" y="524">熊本県</text><text x="692" y="552">宮崎県</text><text x="720" y="567">大分県</text><text x="913" y="480">合計</text></g>
<rect x="895" y="429" width="46" height="31" fill="#fff" fill-opacity=".6" stroke="#f0f0f0" stroke-width="2"/><text x="907" y="449" font-size="12" fill="#e6e6e6">合計</text>
<ellipse cx="909.500" cy="475" rx="26" ry="17.500" fill="none" stroke="#ed1c24" stroke-width="4.500"/>
</svg>
<i class="n"></i><i class="s"></i><i class="w"></i><i class="e"></i><i class="k nw"></i><i class="k ne"></i><i class="k sw"></i><i class="k se"></i>`);

define('page-tabs', `<style>
  :host{display:flex;height:32px;padding-left:5px;color:#bbb}
  .a{width:13px;height:32px;justify-content:flex-start}
  .tab{width:78px;background:#fff;border-left:1px solid #999;border-bottom:3px solid #f2c811;color:#555;font-size:12px;padding-left:2px}
  .add{width:35px;background:#f2c811;color:#777;border-bottom:1px solid #b89a20}
</style>
<button class="a" aria-label="前のページ"><ui-icon name="left"></ui-icon></button><button class="a" aria-label="次のページ"><ui-icon name="rightT"></ui-icon></button>
<button class="tab">ページ 1</button><button class="add" aria-label="ページの追加"><ui-icon name="plusB"></ui-icon></button>`);
define('report-canvas', `<style>
  :host{display:flex;flex-direction:column;background:#eaeaea;min-width:0}
  .area{flex:1;display:flex;align-items:center;padding:0 7px}
  .page{flex:1;display:grid;grid-template-columns:399fr 334fr;gap:9px;align-items:start;background:#fff;box-shadow:0 0 5px #ccc;padding:12px 8px 16px}
  map-visual{margin-top:15px}
</style>
<div class="area"><div class="page"><map-visual></map-visual><pie-visual></pie-visual></div></div>
<page-tabs></page-tabs>`);

/* ---------- right panes ---------- */
define('pane-header', `<style>
  :host{display:flex;align-items:center;justify-content:space-between;height:43px;background:#212121;color:#fff;font-size:14px;padding:0 11px 0 10px}
  h2{white-space:nowrap}
  button{color:#ccc}
</style><h2><slot></slot></h2><button aria-label="折りたたむ"><ui-icon name="rightS"></ui-icon></button>`);
define('field-well', el => `<style>
  :host{display:block}
  h3{height:27px;line-height:26px;padding-left:6px;color:#a6a6a6;white-space:nowrap;overflow:hidden;text-overflow:ellipsis}
  :host([bright]) h3{color:#ccc}
  .well{border:1px dashed #6a6a6a;border-radius:3px;background:#4a4a4a;min-height:24px;margin-right:5px}
  .drop{display:block;width:100%;line-height:24px;height:22px;padding:0 10px 0 9px;color:#aaa;text-align:left;white-space:nowrap}
  :host([bright]) .drop{color:#ccc;padding-left:7px}
  ::slotted(field-pill){margin:2px 1px 0}
  .fill{padding:0 0 7px}
</style><h3>${el.getAttribute('label')}</h3><div class="well ${el.hasAttribute('drop') ? '' : 'fill'}">${el.hasAttribute('drop') ? `<span class="drop">${el.getAttribute('drop')}</span>` : '<slot></slot>'}</div>`);
define('field-pill', el => `<style>
  :host{display:flex;align-items:center;gap:8px;height:21px;background:#333;border:1px solid #1c1c1c;border-radius:3px;color:#fff;padding:0 4px 0 3px}
  :host([filter]){height:25px;padding-left:7px}
  span{flex:1;white-space:nowrap}
  button{color:#888}
</style><span><slot></slot></span>${el.hasAttribute('filter') ? '' : '<button aria-label="オプション"><ui-icon name="caret"></ui-icon></button><button aria-label="削除"><ui-icon name="closeS"></ui-icon></button>'}`);
define('viz-pane', `<style>
  :host{display:flex;flex-direction:column;background:#444;border-left:1px solid #111;min-width:0;overflow:hidden}
  pane-header{flex:none}
  .gallery{display:grid;grid-template-columns:repeat(6,1fr);grid-template-rows:repeat(5,1fr);height:112px;padding:2px 7px 2px 3px;flex:none}
  .gallery button{min-width:0;min-height:0}
  .tabs{display:flex;height:33px;background:#212121;color:#ddd;padding-left:11px;gap:4px;flex:none}
  .tabs button{width:32px;border-bottom:3px solid transparent}
  .tabs .on{border-color:#f2c811}
  .body{position:relative;flex:1;min-height:0}
  .wells{display:flex;flex-direction:column;gap:5px;padding:0 1px 5px 4px}
  .filters{display:flex;flex-direction:column;gap:5px;padding:5px 1px 0 4px}
  h2{background:#212121;color:#fff;font-size:14px;line-height:34px;height:32px;padding-left:13px}
  .thumb{position:absolute;right:0;top:0;width:5px;height:430px;background:#7a7a7a;border-radius:3px}
</style>
<pane-header>視覚化</pane-header>
<div class="gallery">${Array.from({length:29},(_,i)=>`<button aria-label="ビジュアル ${i+1}"><ui-icon name="v${i}"></ui-icon></button>`).join('')}</div>
<div class="tabs"><button class="on" aria-label="フィールド"><ui-icon name="fieldsTab"></ui-icon></button><button aria-label="書式"><ui-icon name="format"></ui-icon></button><button aria-label="分析"><ui-icon name="analytics"></ui-icon></button></div>
<div class="body">
<div class="wells">
<field-well label="凡例"><field-pill>都道府県名</field-pill></field-well>
<field-well label="詳細" drop="ここにデータ フィールド..."></field-well>
<field-well label="値"><field-pill>人口(人)</field-pill></field-well>
<field-well label="ヒント" drop="ここにデータ フィールド..."></field-well>
</div>
<h2>フィルター</h2>
<div class="filters">
<field-well bright label="ビジュアル レベル フィルタ..."><field-pill filter>人口(人) (すべて)</field-pill><field-pill filter>都道府県名 (すべて)</field-pill></field-well>
<field-well bright label="ページ レベル フィルター" drop="ここにデータ フィールド..."></field-well>
<field-well bright label="ドリル スルー フィルター" drop="ドリルスルーするフィー..."></field-well>
</div>
<div class="thumb"></div>
</div>`);
define('field-row', el => `<style>
  :host{display:block;position:relative}
  label{display:flex;align-items:center;height:19px;background:#666;border:1px solid #777;border-radius:2px;color:#fff;padding-left:22px}
  input{appearance:none;width:11px;height:11px;background:#fff;flex:none}
  input:checked{background:#f2c811}
  .tick{position:absolute;left:24px;top:5px}
  .s{width:18px;display:flex;padding-left:4px;color:#aaa;flex:none}
  .ring{position:absolute;left:13px;top:-5px;width:30px;height:30px;border:4px solid #ed1c24;border-radius:50%}
</style><label><input type="checkbox" ${el.hasAttribute('checked') ? 'checked' : ''}><span class="s">${el.hasAttribute('sum') ? '<ui-icon name="sigma"></ui-icon>' : ''}</span><slot></slot></label>
${el.hasAttribute('checked') ? '<svg class="tick" width="9" height="9" viewBox="0 0 9 9" fill="none" stroke="#222" stroke-width="1.800"><path d="M1 4.500L3.500 7.200L8.200 1.500"/></svg><div class="ring"></div>' : ''}`);
define('fields-pane', `<style>
  :host{display:block;background:#444;border-left:2px solid #111;min-width:0}
  .search{display:flex;align-items:center;gap:7px;height:28px;margin:7px 9px 9px 8px;padding:0 0 2px 10px;background:#212121;border:1px solid #000;color:#aaa;font-size:12px}
  input{flex:1;min-width:0;outline:0}
  input::placeholder{color:#aaa;opacity:1}
  .table{display:flex;align-items:center;gap:8px;height:30px;border-top:1px solid #333;padding:3px 0 0 7px;color:#f2c811;font-size:10px}
  .table ui-icon{color:#999}
  .table span{margin-left:3px}
  .rows{display:grid;gap:1px;padding:0 6px 0 4px}
</style>
<pane-header>フィールド</pane-header>
<label class="search"><ui-icon name="search"></ui-icon><input type="text" placeholder="検索" aria-label="検索"></label>
<div class="table"><ui-icon name="tri"></ui-icon><ui-icon name="table"></ui-icon><span>Population_Kyushu</span></div>
<div class="rows"><field-row sum>割合(%)</field-row><field-row sum checked>人口(人)</field-row><field-row sum>全国順位</field-row><field-row>都道府県番号</field-row><field-row checked>都道府県名</field-row></div>`);

define('pbi-app', `<style>
  :host{display:flex;flex-direction:column;min-height:100vh;border:1px solid #a9b665;box-sizing:border-box}
  .main{flex:1;display:grid;grid-template-columns:198px minmax(0,1fr)}
  .work{display:flex;flex-direction:column;min-width:0}
  .panes{flex:1;display:grid;grid-template-columns:minmax(0,1fr) 163px 163px}
</style>
<browser-chrome></browser-chrome>
<pbi-header></pbi-header>
<div class="main"><side-nav></side-nav>
<div class="work"><report-toolbar></report-toolbar><div class="panes"><report-canvas></report-canvas><viz-pane></viz-pane><fields-pane></fields-pane></div></div></div>`);
</script>
</body>
</html>
